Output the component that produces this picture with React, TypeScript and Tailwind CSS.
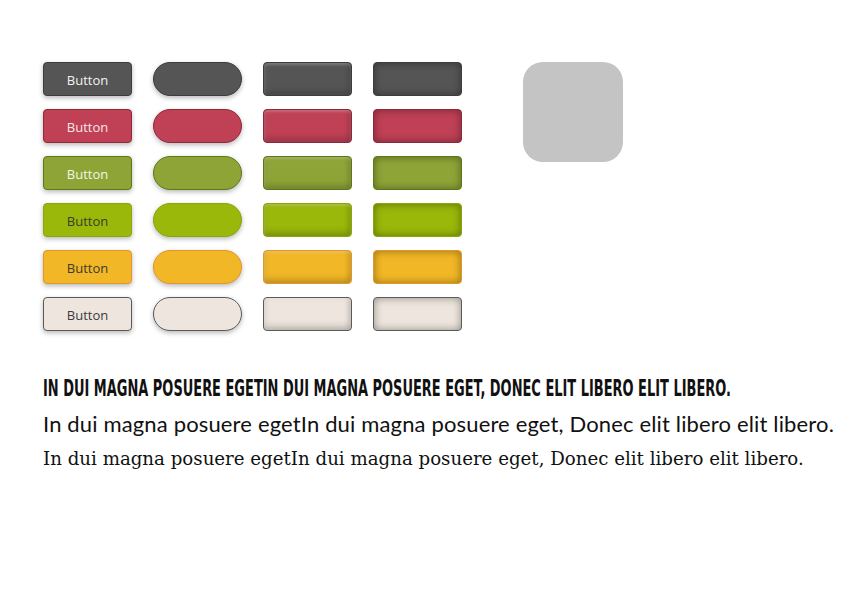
import React from "react";

type Tone = {
  bg: string;
  border: string;
  text: string;
};

const tones: Tone[] = [
  { bg: "bg-[#555555]", border: "border-[#3d3d3d]", text: "text-[#f2f2f2]" },
  { bg: "bg-[#c04055]", border: "border-[#8c2a3b]", text: "text-[#f6e6e8]" },
  { bg: "bg-[#8fa437]", border: "border-[#5b7a12]", text: "text-[#f2f4e6]" },
  { bg: "bg-[#99b80a]", border: "border-[#8aa60c]", text: "text-[#3c3c2c]" },
  { bg: "bg-[#f2b726]", border: "border-[#e3952c]", text: "text-[#3c3a30]" },
  { bg: "bg-[#eee6de]", border: "border-[#5a5a5a]", text: "text-[#3a3a3a]" },
];

const base = "h-[34px] w-[89px] border";

const ButtonRow: React.FC<{ tone: Tone }> = ({ tone }) => (
  <>
    <button
      className={`${base} ${tone.bg} ${tone.border} ${tone.text} rounded-[4px] pt-[3px] text-[13px] shadow-[0_2px_5px_rgba(0,0,0,0.28)] [font-family:'Open_Sans',sans-serif]`}
    >
      Button
    </button>
    <div className={`${base} ${tone.bg} ${tone.border} rounded-full shadow-[0_2px_5px_rgba(0,0,0,0.28)]`} />
    <div
      className={`${base} ${tone.bg} ${tone.border} rounded-[4px] shadow-[inset_0_2px_3px_rgba(255,255,255,0.22),inset_0_-4px_6px_rgba(0,0,0,0.18),inset_-3px_0_5px_rgba(0,0,0,0.1),inset_3px_0_5px_rgba(255,255,255,0.08)]`}
    />
    <div
      className={`${base} ${tone.bg} ${tone.border} rounded-[4px] shadow-[inset_0_0_8px_rgba(0,0,0,0.4)]`}
    />
  </>
);

export default function App() {
  return (
    <div className="min-h-[595px] w-[842px] bg-white pl-[43px] pt-[62px]">
      <div className="flex gap-[61px]">
        <div className="grid grid-cols-[repeat(4,89px)] gap-x-[21px] gap-y-[13px]">
          {tones.map((t, i) => (
            <ButtonRow key={i} tone={t} />
          ))}
        </div>
        <div className="h-[100px] w-[100px] rounded-[20px] bg-[#c4c4c4]" />
      </div>

      <h1 className="mt-[44px] origin-left scale-x-[0.627] whitespace-nowrap text-[23px] font-bold uppercase leading-[26px] text-[#111] [font-family:'DejaVu_Sans_Condensed',sans-serif]">
        In dui magna posuere egetIn dui magna posuere eget, Donec elit libero elit libero.
      </h1>
      <p className="mt-[7px] whitespace-nowrap text-[22px] leading-[32px] tracking-[0.15px] text-[#111] [font-family:Lato,sans-serif]">
        In dui magna posuere egetIn dui magna posuere eget, Donec elit libero elit libero.
      </p>
      <p className="mt-[4px] whitespace-nowrap text-[18.2px] leading-[30px] text-[#111] [font-family:'DejaVu_Serif',serif]">
        In dui magna posuere egetIn dui magna posuere eget, Donec elit libero elit libero.
      </p>
    </div>
  );
}
